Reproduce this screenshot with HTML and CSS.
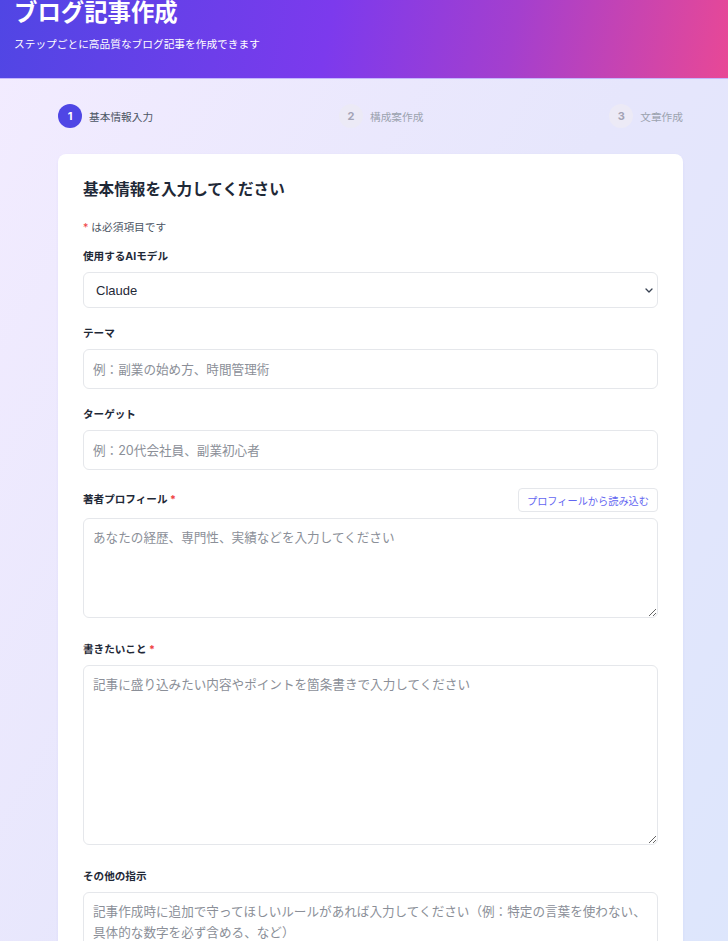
FILE: index.html
```html
<!DOCTYPE html>
<html lang="ja">
<head>
  <meta charset="UTF-8" />
  <meta name="viewport" content="width=device-width, initial-scale=1" />
  <title>ブログ記事作成</title>
  <link rel="stylesheet" href="styles.css">
</head>
<body>
  <header class="header">
    <h1>ブログ記事作成</h1>
    <p class="subtitle">ステップごとに高品質なブログ記事を作成できます</p>
  </header>

  <main class="main">
    <div class="steps">
      <div class="step active">
        <span class="step-num">1</span>
        <span class="step-label">基本情報入力</span>
      </div>
      <div class="step">
        <span class="step-num">2</span>
        <span class="step-label">構成案作成</span>
      </div>
      <div class="step">
        <span class="step-num">3</span>
        <span class="step-label">文章作成</span>
      </div>
    </div>

    <section class="card">
      <h2>基本情報を入力してください</h2>
      <p class="note"><span class="req">*</span> は必須項目です</p>

      <div class="field">
        <label class="label" for="model">使用するAIモデル</label>
        <div class="select-wrap">
          <select id="model" class="control select">
            <option>Claude</option>
            <option>GPT-4</option>
          </select>
          <svg class="chevron" width="8" height="5" viewBox="0 0 8 5" aria-hidden="true">
            <path d="M1 1l3 3 3-3" fill="none" stroke="#374151" stroke-width="1.3" stroke-linecap="round" stroke-linejoin="round"/>
          </svg>
        </div>
      </div>

      <div class="field">
        <label class="label" for="theme">テーマ</label>
        <input id="theme" class="control input" type="text" placeholder="例：副業の始め方、時間管理術">
      </div>

      <div class="field">
        <label class="label" for="target">ターゲット</label>
        <input id="target" class="control input" type="text" placeholder="例：20代会社員、副業初心者">
      </div>

      <div class="field area">
        <div class="label-row">
          <label class="label" for="profile">著者プロフィール <span class="req">*</span></label>
          <button class="load-btn" type="button">プロフィールから読み込む</button>
        </div>
        <textarea id="profile" class="control textarea short" placeholder="あなたの経歴、専門性、実績などを入力してください"></textarea>
      </div>

      <div class="field area">
        <label class="label" for="points">書きたいこと <span class="req">*</span></label>
        <textarea id="points" class="control textarea tall" placeholder="記事に盛り込みたい内容やポイントを箇条書きで入力してください"></textarea>
      </div>

      <div class="field area">
        <label class="label" for="extra">その他の指示</label>
        <textarea id="extra" class="control textarea short" placeholder="記事作成時に追加で守ってほしいルールがあれば入力してください（例：特定の言葉を使わない、具体的な数字を必ず含める、など）"></textarea>
      </div>
    </section>
  </main>
</body>
</html>
```

FILE: styles.css
```css
* {
  box-sizing: border-box;
}

body {
  margin: 0;
  min-height: 100vh;
  background: linear-gradient(120deg, #f3ecff 0%, #e6e6fc 50%, #dce6fc 100%);
  color: #1f2937;
  font-family: Inter, "Noto Sans CJK JP", sans-serif;
}

.header {
  height: 79px;
  padding: 0 14px;
  background: linear-gradient(100deg, #5046e4 0%, #7c3aed 45%, #a43fce 70%, #e84896 100%);
  color: #fff;
  border-bottom: 1px solid #c4b5fd;
}

.header h1 {
  margin: 0;
  font-size: 23.4px;
  line-height: 30px;
  font-weight: 700;
  position: relative;
  top: -2px;
}

.subtitle {
  margin: 7px 0 0;
  font-size: 10.7px;
  line-height: 16px;
}

.main {
  padding: 25px 45px 40px 58px;
}

.steps {
  display: flex;
  justify-content: space-between;
  align-items: center;
  margin-bottom: 26px;
}

.step {
  display: flex;
  align-items: center;
  gap: 7px;
}

.step-num {
  width: 24px;
  height: 24px;
  border-radius: 50%;
  display: flex;
  justify-content: center;
  align-items: center;
  font-size: 11px;
  font-weight: 700;
  background: #eceaf6;
  color: #a3a3b5;
}

.step-label {
  font-size: 10.7px;
  color: #9ca3af;
}

.step.active .step-num {
  background: #4f46e5;
  color: #fff;
}

.step.active .step-label {
  color: #4b5563;
}

.card {
  background: #fff;
  border-radius: 8px;
  padding: 26px 25px 30px;
  box-shadow: 0 1px 3px rgba(79, 70, 229, 0.06);
}

.card h2 {
  margin: 0 0 20px;
  font-size: 15.6px;
  line-height: 20px;
  font-weight: 700;
  color: #1f2937;
}

.note {
  margin: 0 0 13px;
  font-size: 10.7px;
  line-height: 16px;
  color: #4b5563;
}

.req {
  color: #ef4444;
}

.field {
  margin-bottom: 18px;
}

.field.area {
  margin-bottom: 24px;
}

.label {
  display: block;
  font-size: 10.6px;
  line-height: 16px;
  font-weight: 700;
  color: #1f2937;
  margin-bottom: 7px;
}

.label-row {
  display: flex;
  justify-content: space-between;
  align-items: center;
  margin-bottom: 6px;
}

.label-row .label {
  margin-bottom: 0;
}

.load-btn {
  background: #fff;
  border: 1px solid #e5e7eb;
  border-radius: 4px;
  padding: 0 8px;
  height: 24px;
  font-family: inherit;
  font-size: 10.2px;
  color: #6366f1;
  cursor: pointer;
}

.control {
  display: block;
  width: 100%;
  border: 1px solid #e5e7eb;
  border-radius: 6px;
  background: #fff;
  font-family: inherit;
  font-size: 12.6px;
  color: #1f2937;
}

.control::placeholder {
  color: #8b8f98;
}

.select-wrap {
  position: relative;
}

.select {
  height: 36px;
  padding: 0 12px;
  appearance: none;
  font-family: "Liberation Sans", "Noto Sans CJK JP", sans-serif;
  font-size: 13px;
}

.chevron {
  position: absolute;
  right: 5px;
  top: 16px;
  pointer-events: none;
}

.input {
  height: 40px;
  padding: 0 9px;
}

.textarea {
  padding: 8px 9px;
  line-height: 21px;
  resize: vertical;
}

.textarea.short {
  height: 100px;
}

.textarea.tall {
  height: 180px;
}
```
